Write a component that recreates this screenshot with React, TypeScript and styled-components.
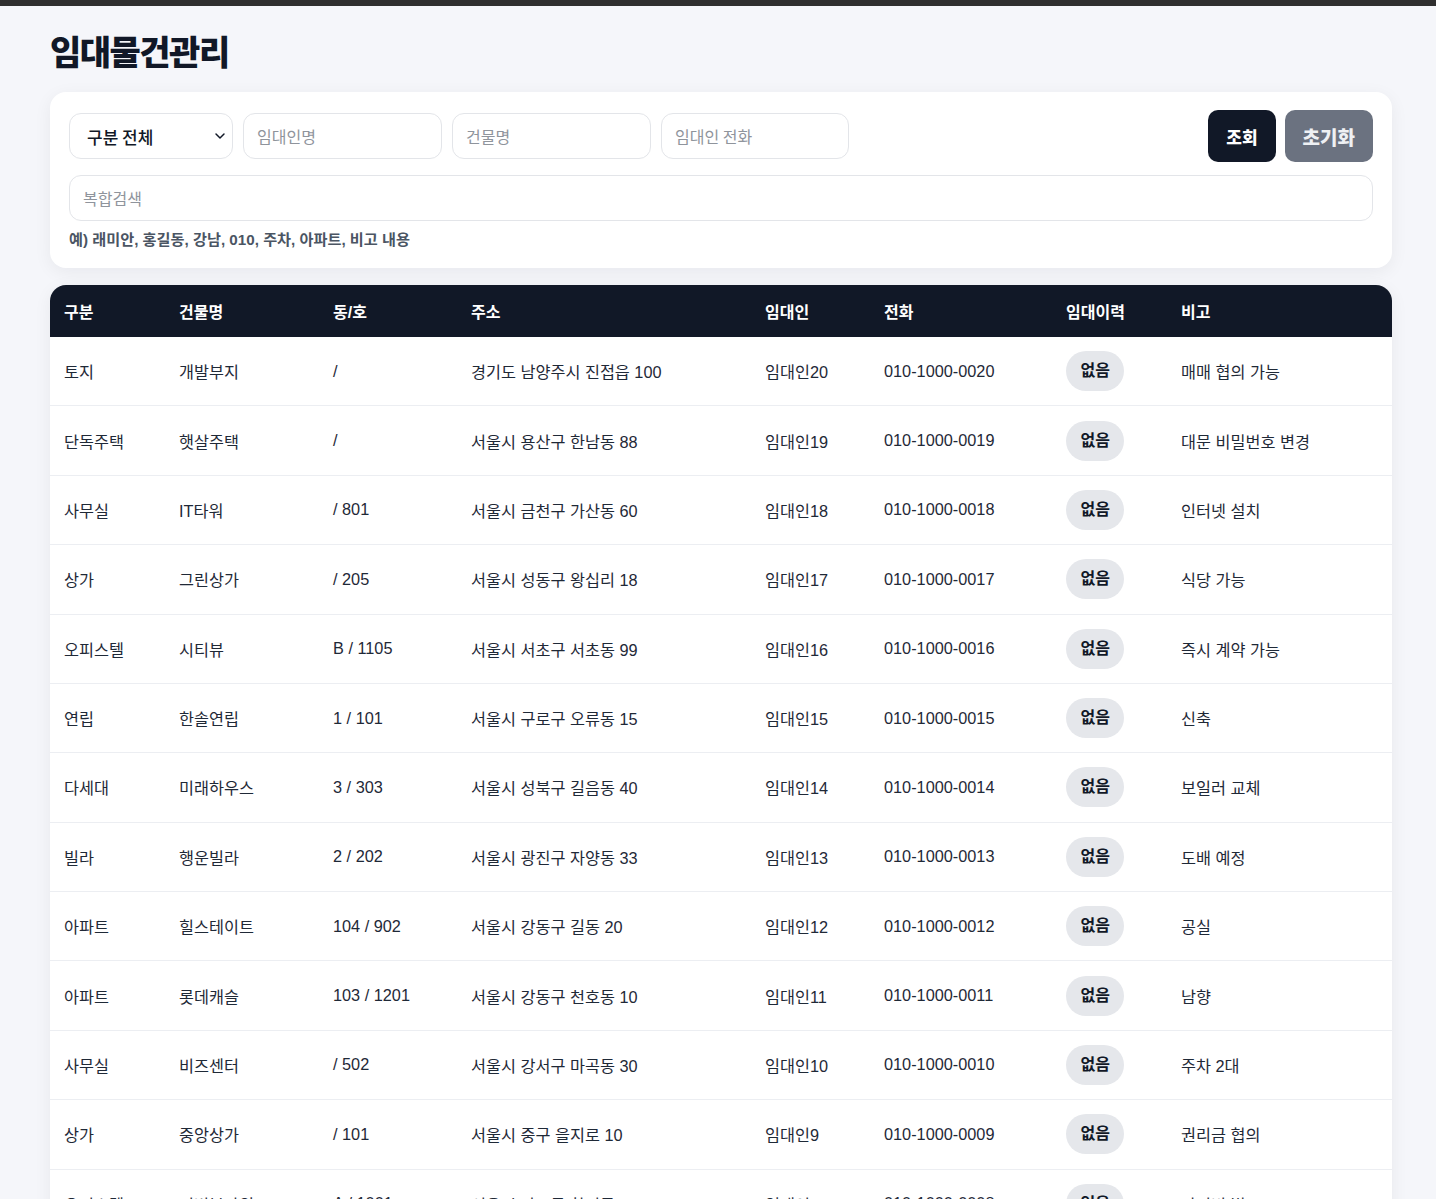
import * as React from "react";
import styled, { createGlobalStyle } from "styled-components";
import { ChevronDown } from "lucide-react";

type Rental = {
  kind: string;
  building: string;
  unit: string;
  address: string;
  owner: string;
  phone: string;
  history: string;
  memo: string;
};

const rentals: Rental[] = [
  { kind: "토지", building: "개발부지", unit: "/", address: "경기도 남양주시 진접읍 100", owner: "임대인20", phone: "010-1000-0020", history: "없음", memo: "매매 협의 가능" },
  { kind: "단독주택", building: "햇살주택", unit: "/", address: "서울시 용산구 한남동 88", owner: "임대인19", phone: "010-1000-0019", history: "없음", memo: "대문 비밀번호 변경" },
  { kind: "사무실", building: "IT타워", unit: "/ 801", address: "서울시 금천구 가산동 60", owner: "임대인18", phone: "010-1000-0018", history: "없음", memo: "인터넷 설치" },
  { kind: "상가", building: "그린상가", unit: "/ 205", address: "서울시 성동구 왕십리 18", owner: "임대인17", phone: "010-1000-0017", history: "없음", memo: "식당 가능" },
  { kind: "오피스텔", building: "시티뷰", unit: "B / 1105", address: "서울시 서초구 서초동 99", owner: "임대인16", phone: "010-1000-0016", history: "없음", memo: "즉시 계약 가능" },
  { kind: "연립", building: "한솔연립", unit: "1 / 101", address: "서울시 구로구 오류동 15", owner: "임대인15", phone: "010-1000-0015", history: "없음", memo: "신축" },
  { kind: "다세대", building: "미래하우스", unit: "3 / 303", address: "서울시 성북구 길음동 40", owner: "임대인14", phone: "010-1000-0014", history: "없음", memo: "보일러 교체" },
  { kind: "빌라", building: "행운빌라", unit: "2 / 202", address: "서울시 광진구 자양동 33", owner: "임대인13", phone: "010-1000-0013", history: "없음", memo: "도배 예정" },
  { kind: "아파트", building: "힐스테이트", unit: "104 / 902", address: "서울시 강동구 길동 20", owner: "임대인12", phone: "010-1000-0012", history: "없음", memo: "공실" },
  { kind: "아파트", building: "롯데캐슬", unit: "103 / 1201", address: "서울시 강동구 천호동 10", owner: "임대인11", phone: "010-1000-0011", history: "없음", memo: "남향" },
  { kind: "사무실", building: "비즈센터", unit: "/ 502", address: "서울시 강서구 마곡동 30", owner: "임대인10", phone: "010-1000-0010", history: "없음", memo: "주차 2대" },
  { kind: "상가", building: "중앙상가", unit: "/ 101", address: "서울시 중구 을지로 10", owner: "임대인9", phone: "010-1000-0009", history: "없음", memo: "권리금 협의" },
  { kind: "오피스텔", building: "리버뷰타워", unit: "A / 1001", address: "서울시 마포구 합정동 21", owner: "임대인8", phone: "010-1000-0008", history: "없음", memo: "관리비 별도" },
  { kind: "아파트", building: "래미안", unit: "101 / 1503", address: "서울시 강남구 역삼동 12", owner: "임대인7", phone: "010-1000-0007", history: "없음", memo: "주차 가능" },
];

const columns = [
  { label: "구분", width: 115 },
  { label: "건물명", width: 154 },
  { label: "동/호", width: 138 },
  { label: "주소", width: 294 },
  { label: "임대인", width: 119 },
  { label: "전화", width: 182 },
  { label: "임대이력", width: 115 },
  { label: "비고", width: 225 },
];

export default function App() {
  return (
    <>
      <GlobalStyle />
      <TopBar />
      <Page>
        <Title>임대물건관리</Title>

        <SearchCard>
          <FilterRow>
            <SelectWrap>
              <Select defaultValue="all">
                <option value="all">구분 전체</option>
                <option value="apt">아파트</option>
                <option value="office">사무실</option>
              </Select>
              <Chevron size={16} strokeWidth={2.2} />
            </SelectWrap>
            <Field $width={199} placeholder="임대인명" />
            <Field $width={199} placeholder="건물명" />
            <Field $width={188} placeholder="임대인 전화" />
            <Spacer />
            <Button $variant="primary">조회</Button>
            <Button $variant="muted">초기화</Button>
          </FilterRow>
          <WideField placeholder="복합검색" />
          <Hint>예) 래미안, 홍길동, 강남, 010, 주차, 아파트, 비고 내용</Hint>
        </SearchCard>

        <TableCard>
          <Table>
            <colgroup>
              {columns.map((c) => (
                <col key={c.label} style={{ width: c.width }} />
              ))}
            </colgroup>
            <thead>
              <tr>
                {columns.map((c) => (
                  <Th key={c.label}>{c.label}</Th>
                ))}
              </tr>
            </thead>
            <tbody>
              {rentals.map((r) => (
                <tr key={r.owner}>
                  <Td>{r.kind}</Td>
                  <Td>{r.building}</Td>
                  <Td>{r.unit}</Td>
                  <Td>{r.address}</Td>
                  <Td>{r.owner}</Td>
                  <Td>{r.phone}</Td>
                  <Td>
                    <Badge>{r.history}</Badge>
                  </Td>
                  <Td>{r.memo}</Td>
                </tr>
              ))}
            </tbody>
          </Table>
        </TableCard>
      </Page>
    </>
  );
}

const GlobalStyle = createGlobalStyle`
  html, body {
    margin: 0;
    padding: 0;
    background: #f5f6fa;
  }
  body {
    font-family: "Liberation Sans", "Noto Sans CJK KR", sans-serif;
    color: #1f2937;
  }
  * {
    box-sizing: border-box;
  }
`;

const TopBar = styled.div`
  height: 6px;
  background: #2f2f2f;
`;

const Page = styled.main`
  width: 1392px;
  padding: 25px 0 40px 50px;
`;

const Title = styled.h1`
  margin: 0 0 21px;
  font-family: "Noto Sans CJK KR", sans-serif;
  font-size: 34px;
  line-height: 40px;
  font-weight: 900;
  letter-spacing: -1.5px;
  color: #111827;
`;

const SearchCard = styled.section`
  background: #ffffff;
  border-radius: 16px;
  padding: 18px 19px 18px;
  box-shadow: 0 4px 18px rgba(17, 24, 39, 0.06);
`;

const FilterRow = styled.div`
  display: flex;
  align-items: center;
  gap: 10px;
  height: 52px;
`;

const SelectWrap = styled.div`
  position: relative;
  width: 164px;
`;

const Select = styled.select`
  appearance: none;
  width: 100%;
  height: 46px;
  padding: 0 32px 0 17px;
  border: 1px solid #e3e5e9;
  border-radius: 12px;
  background: #ffffff;
  font-family: "Noto Sans CJK KR", sans-serif;
  font-size: 17px;
  font-weight: 500;
  color: #111827;
  outline: none;
`;

const Chevron = styled(ChevronDown)`
  position: absolute;
  right: 5px;
  top: 15px;
  color: #111827;
  pointer-events: none;
`;

const Field = styled.input<{ $width: number }>`
  width: ${(p) => p.$width}px;
  height: 46px;
  padding: 0 13px;
  border: 1px solid #e3e5e9;
  border-radius: 12px;
  background: #ffffff;
  font-family: "Noto Sans CJK KR", sans-serif;
  font-size: 16px;
  color: #111827;
  outline: none;
  &::placeholder {
    color: #8f949c;
  }
`;

const Spacer = styled.div`
  flex: 1;
`;

const Button = styled.button<{ $variant: "primary" | "muted" }>`
  height: 52px;
  padding: 0 18px;
  border: 0;
  border-radius: 10px;
  background: ${(p) => (p.$variant === "primary" ? "#111827" : "#6b7280")};
  color: ${(p) => (p.$variant === "primary" ? "#ffffff" : "#eef0f3")};
  font-family: "Noto Sans CJK KR", sans-serif;
  font-size: ${(p) => (p.$variant === "primary" ? "17px" : "19px")};
  font-weight: 800;
  cursor: pointer;
  & + & {
    margin-left: -1px;
  }
`;

const WideField = styled.input`
  display: block;
  width: 100%;
  height: 46px;
  margin-top: 13px;
  padding: 0 13px;
  border: 1px solid #e3e5e9;
  border-radius: 12px;
  background: #ffffff;
  font-family: "Noto Sans CJK KR", sans-serif;
  font-size: 16px;
  outline: none;
  &::placeholder {
    color: #8f949c;
  }
`;

const Hint = styled.p`
  margin: 9px 0 0;
  font-size: 15.2px;
  line-height: 20px;
  font-weight: 700;
  color: #4b5563;
`;

const TableCard = styled.section`
  margin-top: 17px;
  background: #ffffff;
  border-radius: 16px 16px 0 0;
  overflow: hidden;
  box-shadow: 0 4px 18px rgba(17, 24, 39, 0.06);
`;

const Table = styled.table`
  width: 100%;
  table-layout: fixed;
  border-collapse: separate;
  border-spacing: 0;
`;

const Th = styled.th`
  height: 52px;
  padding: 0 14px;
  background: #111827;
  color: #ffffff;
  text-align: left;
  font-size: 16px;
  font-weight: 700;
  white-space: nowrap;
`;

const Td = styled.td`
  padding: 14.2px 14px;
  border-bottom: 1px solid #eceef2;
  font-size: 16.3px;
  color: #1f2937;
  white-space: nowrap;
  vertical-align: middle;
`;

const Badge = styled.span`
  display: inline-block;
  padding: 8px 14.5px;
  border-radius: 20px;
  background: #e5e7eb;
  color: #111827;
  font-size: 16px;
  line-height: 24px;
  font-weight: 700;
`;
